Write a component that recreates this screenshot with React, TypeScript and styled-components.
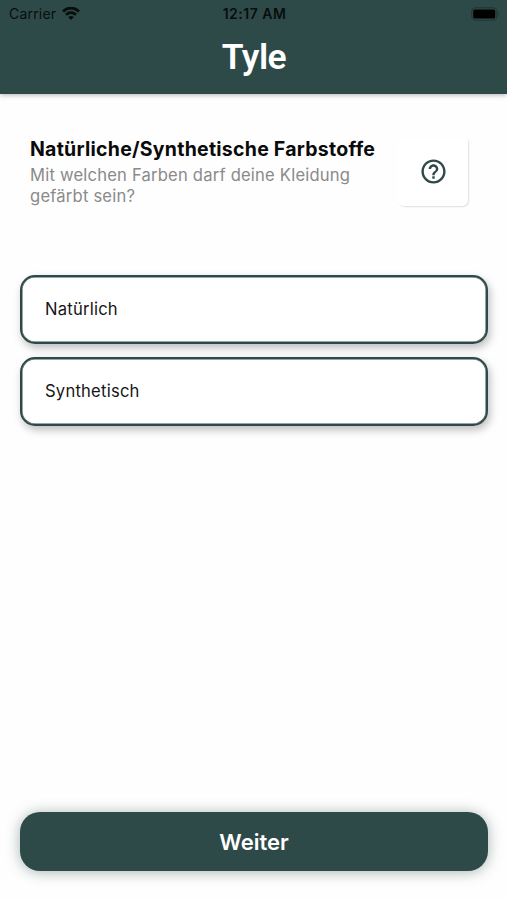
import React from "react";
import styled, { createGlobalStyle } from "styled-components";
import { MdHelpOutline } from "react-icons/md";

const GREEN = "#2e4a48";

const GlobalStyle = createGlobalStyle`
  *, *::before, *::after { box-sizing: border-box; }
  body { margin: 0; background: #fefefe; font-family: Inter, "Liberation Sans", sans-serif; }
`;

const Screen = styled.div`
  display: flex;
  flex-direction: column;
  width: 507px;
  height: 900px;
  overflow: hidden;
`;

const Header = styled.header`
  flex: none;
  height: 94px;
  background: ${GREEN};
  box-shadow: 0 1px 5px rgba(30, 40, 50, 0.35);
`;

const StatusBar = styled.div`
  display: grid;
  grid-template-columns: 1fr auto 1fr;
  align-items: center;
  height: 27px;
  padding: 0 7px 0 9px;
  color: #080d0d;
  font-size: 14px;
  line-height: 17px;
`;

const Carrier = styled.div`
  display: flex;
  align-items: center;
  gap: 6px;
  letter-spacing: 0.2px;
`;

const Clock = styled.time`
  font-weight: 600;
  letter-spacing: 0.5px;
`;

const Battery = styled.svg`
  justify-self: end;
`;

const Logo = styled.h1`
  margin: 8px 0 0;
  padding-left: 1px;
  text-align: center;
  color: #fff;
  font: 600 35.5px/44px Roboto, sans-serif;
  letter-spacing: -0.5px;
`;

const Question = styled.section`
  display: flex;
  justify-content: space-between;
  height: 71px;
  margin: 42px 39px 0 30px;
`;

const Title = styled.h2`
  margin: 0;
  padding-top: 1px;
  font-size: 19.5px;
  line-height: 25px;
  font-weight: 700;
  letter-spacing: 0.25px;
  color: #0a0a0a;
  white-space: nowrap;
`;

const Hint = styled.p`
  margin: 3px 0 0;
  font-size: 16.6px;
  line-height: 21px;
  letter-spacing: 0.2px;
  color: #8a8a8a;
  white-space: nowrap;
`;

const HelpButton = styled.button`
  display: flex;
  align-items: center;
  justify-content: center;
  flex: none;
  width: 70px;
  height: 70px;
  padding: 0;
  border: 0;
  border-radius: 6px;
  background: #fff;
  color: ${GREEN};
  box-shadow: 1px 1px 1.5px rgba(0, 0, 0, 0.12);
  clip-path: inset(3px -4px -4px -1px);

  svg {
    margin-top: 1px;
  }
`;

const Options = styled.div`
  display: flex;
  flex-direction: column;
  gap: 13px;
  margin: 68px 19px 0 20px;
`;

const Option = styled.button`
  height: 69px;
  padding: 0 23px 2px;
  border: 2px solid ${GREEN};
  border-radius: 15px;
  background: #fff;
  color: #161616;
  font: 400 16.6px/22px Inter, sans-serif;
  letter-spacing: 0.22px;
  text-align: left;
  box-shadow:
    inset 0 0 0 0.5px ${GREEN},
    2px 4px 8px rgba(0, 0, 0, 0.26);
`;

const NextButton = styled.button`
  height: 59px;
  margin: auto 19px 29px 20px;
  padding: 0;
  border: 0;
  border-radius: 20px;
  background: ${GREEN};
  color: #fff;
  font: 600 22px/28px Inter, sans-serif;
  box-shadow: 0 1px 14px rgba(46, 74, 72, 0.42);
`;

const options = ["Natürlich", "Synthetisch"];

export default function App() {
  return (
    <Screen>
      <GlobalStyle />
      <Header>
        <StatusBar>
          <Carrier>
            <span>Carrier</span>
            <svg width="18" height="14" viewBox="0 0 18 14" fill="none" stroke="currentColor" strokeWidth="2.8">
              <path d="M1 4.4C5.5 0 12.5 0 17 4.4" />
              <path d="M4 7.8C7 5 11 5 14 7.8" />
              <path d="M6.2 10.2Q9 7.8 11.8 10.2L9 13.1Z" fill="currentColor" stroke="none" />
            </svg>
          </Carrier>
          <Clock>12:17 AM</Clock>
          <Battery width="29" height="14" viewBox="0 0 29 14">
            <rect x=".8" y=".8" width="25" height="12.4" rx="3.8" fill="none" stroke="#203533" strokeWidth="1.1" />
            <rect x="2.2" y="2.4" width="22" height="9.2" rx="1.6" fill="#000" />
            <path d="M27.2 4.8Q29 7 27.2 9.2Z" fill="#203533" />
          </Battery>
        </StatusBar>
        <Logo>Tyle</Logo>
      </Header>
      <Question>
        <div>
          <Title>Natürliche/Synthetische Farbstoffe</Title>
          <Hint>
            Mit welchen Farben darf deine Kleidung
            <br />
            gefärbt sein?
          </Hint>
        </div>
        <HelpButton aria-label="Hilfe">
          <MdHelpOutline size={29} />
        </HelpButton>
      </Question>
      <Options>
        {options.map((label) => (
          <Option key={label}>{label}</Option>
        ))}
      </Options>
      <NextButton>Weiter</NextButton>
    </Screen>
  );
}
